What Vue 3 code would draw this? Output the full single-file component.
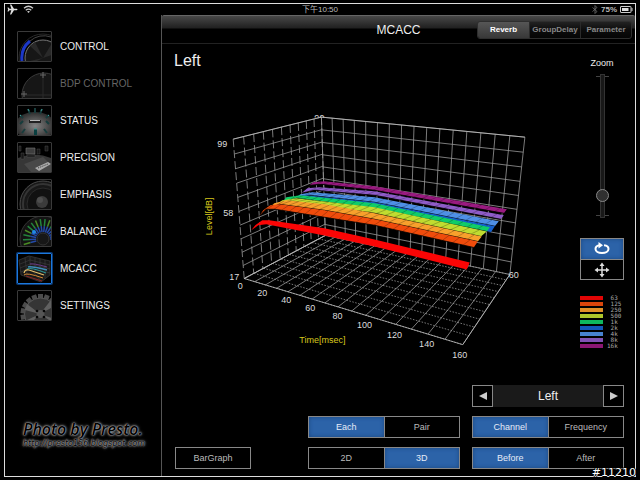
<script setup>
import { ref } from 'vue';

const menu = [
  { id: 'control', label: 'CONTROL' },
  { id: 'bdp', label: 'BDP CONTROL', disabled: true },
  { id: 'status', label: 'STATUS' },
  { id: 'precision', label: 'PRECISION' },
  { id: 'emphasis', label: 'EMPHASIS' },
  { id: 'balance', label: 'BALANCE' },
  { id: 'mcacc', label: 'MCACC' },
  { id: 'settings', label: 'SETTINGS' },
];
const tabs = ['Reverb', 'GroupDelay', 'Parameter'];
const channels = ['Left', 'Center', 'Right'];

const page = ref('mcacc');
const tab = ref('Reverb');
const zoom = ref(12);
const mode = ref('rotate');
const channel = ref(0);
const grouping = ref('Each');
const axis = ref('Channel');
const view = ref('3D');
const phase = ref('Before');

const stepChannel = (n) => {
  channel.value = (channel.value + n + channels.length) % channels.length;
};

// near / far edges of each band, back to front
const bands = [
  { label: '16k', color: '#9a1a80', near: [[310, 185], [322, 184], [375, 190], [504, 213]], far: [[314, 182], [324, 181], [375, 186], [507, 209]] },
  { label: ' 8k', color: '#8f5cc8', near: [[302, 193], [315, 190], [375, 195], [501, 219]], far: [[308, 188], [320, 187], [375, 191], [504, 215]] },
  { label: ' 4k', color: '#4f90e6', near: [[295, 199], [309, 195], [375, 202], [495, 226]], far: [[301, 194], [313, 192], [375, 197], [499, 221]] },
  { label: ' 2k', color: '#1560cc', near: [[289, 202], [303, 198], [375, 206], [491, 232]], far: [[295, 196], [307, 195], [375, 202], [495, 226]] },
  { label: ' 1k', color: '#10cc68', near: [[283, 202], [297, 198], [375, 208], [487, 231]], far: [[287, 197], [301, 195], [375, 203], [490, 227]] },
  { label: ' 500', color: '#c0dc30', near: [[275, 206], [291, 201], [375, 213], [481, 236]], far: [[283, 200], [297, 198], [375, 207], [487, 231]] },
  { label: ' 250', color: '#f8a02c', near: [[267, 210], [280, 204], [325, 210], [375, 219], [478, 241]], far: [[275, 203], [287, 200], [325, 204], [375, 213], [482, 236]] },
  { label: ' 125', color: '#f04c0c', near: [[260, 216], [267, 209], [276, 209], [325, 217], [375, 225], [474, 247]], far: [[264, 210], [271, 205], [280, 204], [325, 210], [375, 219], [478, 241]] },
  { label: ' 63', color: '#fb0505', near: [[252, 230], [259, 225], [267, 224], [325, 235], [375, 246], [467, 269]], far: [[256, 225], [263, 220], [270, 220], [325, 228], [375, 239], [470, 262]] },
];
const legend = [...bands].reverse();

// maps the unit square onto a quad, in perspective
const project = ([a, b, c, d]) => {
  const dx1 = b[0] - c[0];
  const dx2 = d[0] - c[0];
  const sx = a[0] - b[0] + c[0] - d[0];
  const dy1 = b[1] - c[1];
  const dy2 = d[1] - c[1];
  const sy = a[1] - b[1] + c[1] - d[1];
  const det = dx1 * dy2 - dx2 * dy1;
  const g = (sx * dy2 - dx2 * sy) / det;
  const h = (dx1 * sy - sx * dy1) / det;
  return (u, v) => {
    const w = g * u + h * v + 1;
    return [
      ((b[0] - a[0] + g * b[0]) * u + (d[0] - a[0] + h * d[0]) * v + a[0]) / w,
      ((b[1] - a[1] + g * b[1]) * u + (d[1] - a[1] + h * d[1]) * v + a[1]) / w,
    ];
  };
};

const seg = (p, q) => `M${p[0].toFixed(1)} ${p[1].toFixed(1)}L${q[0].toFixed(1)} ${q[1].toFixed(1)}`;

const grid = (quad, cols, rows) => {
  const at = project(quad);
  let down = '';
  let across = '';
  for (let i = 0; i <= cols; i++) down += seg(at(i / cols, 0), at(i / cols, 1));
  for (let i = 0; i <= rows; i++) across += seg(at(0, i / rows), at(1, i / rows));
  return { down, across };
};

const leftWall = grid([[234, 139], [322, 117], [326, 235], [245, 278]], 10, 10);
const backWall = grid([[322, 117], [525, 137], [510, 274], [326, 235]], 16, 10);
const floor = grid([[326, 235], [510, 274], [463, 344], [245, 278]], 16, 10);

const outline = (band) => [...band.near, ...[...band.far].reverse()].map((p) => p.join(',')).join(' ');

const along = (pts, x) => {
  let i = 0;
  while (i < pts.length - 2 && pts[i + 1][0] < x) i++;
  const [p, q] = [pts[i], pts[i + 1]];
  return [x, p[1] + ((q[1] - p[1]) * (x - p[0])) / (q[0] - p[0])];
};

const ribs = (band) => {
  const n0 = band.near[0][0];
  const n1 = band.near.at(-1)[0];
  const f0 = band.far[0][0];
  const f1 = band.far.at(-1)[0];
  let d = '';
  for (let i = 1; i < 24; i++) {
    const t = (i / 24) * (0.8 + (0.2 * i) / 24);
    d += seg(along(band.near, n0 + (n1 - n0) * t), along(band.far, f0 + (f1 - f0) * t + 3));
  }
  return d;
};

const ticks = [
  ['99', 223, 147], ['58', 229, 216], ['17', 235, 280], ['0', 241, 288],
  ['20', 263, 295], ['40', 287, 302], ['60', 311, 310], ['80', 338, 318],
  ['100', 365, 327], ['120', 395, 337], ['140', 427, 346], ['160', 460, 357], ['60', 514, 278],
];

const fan = Array.from({ length: 15 }, (_, i) => i * 14 - 106);
const teeth = Array.from({ length: 18 }, (_, i) => i * 20);
</script>

<template>
  <div class="screen">
    <header class="status-bar">
      <div class="status-left">
        <svg width="11" height="11" viewBox="0 0 22 22" fill="#ddd"><path d="M21 11c0-1-1-1.700-3-1.700h-4L8.500 1H6l2.600 8.300H5L3 7H1l1.200 4L1 15h2l2-2.300h3.600L6 21h2.500l5.500-8.300h4c2 0 3-.7 3-1.700z" /></svg>
        <svg width="11" height="9" viewBox="0 0 22 18" fill="none" stroke="#ccc" stroke-width="2.400"><path d="M2 6.500Q11-1.500 20 6.500M5.500 10.500q5.500-4.500 11 0" /><path d="M11 16l-3-3q3-2.200 6 0z" fill="#ccc" stroke="none" /></svg>
      </div>
      <time class="clock">下午10:50</time>
      <div class="status-right">
        <svg width="6" height="9" viewBox="0 0 12 18" fill="none" stroke="#777" stroke-width="1.500"><path d="M1 5l9 8-4 4V1l4 4-9 8" /></svg>
        <span>75%</span>
        <svg width="13" height="7" viewBox="0 0 26 14"><rect x="1" y="1" width="21" height="12" rx="1" fill="none" stroke="#ccc" stroke-width="2" /><rect x="4" y="4" width="13" height="6" fill="#ddd" /><path d="M23 4h2v6h-2z" fill="#ccc" /></svg>
      </div>
    </header>

    <div class="body">
      <aside class="sidebar">
        <nav class="menu">
          <button
            v-for="item in menu"
            :key="item.id"
            class="menu-item"
            :class="{ active: page === item.id }"
            :disabled="item.disabled"
            @click="page = item.id"
          >
            <svg class="thumb" viewBox="0 0 33 29" aria-hidden="true">
              <g v-if="item.id === 'control'" fill="none">
                <circle cx="25" cy="26" r="24" stroke="#292929" />
                <path d="M4 29A22 22 0 0 1 12 9" stroke="#1c38c8" stroke-width="3" />
                <circle cx="25" cy="26" r="18" fill="#161616" stroke="#777" />
                <path d="M25 26L12 14l5-4zM25 26l9-15v12zM25 26L12 29h7z" fill="#292929" />
                <path d="M12 9A22 22 0 0 1 33 5" stroke="#444" />
              </g>
              <g v-else-if="item.id === 'bdp'" fill="none" stroke="#3a3a3a">
                <circle cx="26" cy="26" r="22" fill="#161616" />
                <path d="M25 3v26M4 26h29" stroke="#2a2a2a" />
                <path d="M25 3v6M22 6h6M6 22v6M3 25h6" stroke="#666" />
              </g>
              <g v-else-if="item.id === 'status'">
                <radialGradient id="dial"><stop offset="0" stop-color="#858585" /><stop offset="1" stop-color="#2c2c2c" /></radialGradient>
                <ellipse cx="17" cy="20" rx="20" ry="14" fill="url(#dial)" />
                <path d="M11 14h12v3H11z" fill="#222" /><path d="M12 14h10v1H12z" fill="#bbb" />
                <path d="M10 3l2 5M17 2v5M24 3l-2 5M2 9l3 3M31 9l-3 3M2 18l3-3M31 18l-3-3M4 27l3-4M29 27l-3-4" stroke="#173c3c" stroke-width="2" />
                <path d="M16 23h3v6h-3z" fill="#0a3f40" />
                <path d="M10 3l1 2M24 3l-1 2M2 9l1 1M31 9l-1 1M16 23h3" stroke="#3f9a95" />
              </g>
              <g v-else-if="item.id === 'precision'">
                <path d="M0 15Q17 8 33 15v14H0z" fill="#363636" />
                <path d="M6 21l19-7 8 8v7H13z" fill="#484848" />
                <path d="M8 5h9v6H8z" fill="#3e3e3e" stroke="#777" stroke-width=".6" />
                <path d="M3 10h3v6H3zM19 6h3v5h-3zM27 3h3v5h-3zM1 3h2v5H1zM9 12h8v2H9z" fill="#181818" stroke="#555" stroke-width=".4" />
                <path d="M17 25l13-6 3 2-12 7z" fill="#aaa" /><path d="M20 25l10-4" stroke="#333" stroke-dasharray="1 1" />
              </g>
              <g v-else-if="item.id === 'emphasis'" fill="none">
                <circle cx="25" cy="24" r="23" fill="#181818" stroke="#494949" />
                <circle cx="25" cy="24" r="20" stroke="#343434" stroke-width="2" />
                <circle cx="25" cy="24" r="16" fill="#111" stroke="#2b2b2b" />
                <circle cx="24" cy="22" r="6" fill="#3b3b3b" />
                <circle cx="22" cy="20" r="3" fill="#4e4e4e" />
              </g>
              <g v-else-if="item.id === 'balance'">
                <circle cx="25" cy="22" r="23" fill="#131313" stroke="#333" />
                <g v-for="(a, i) in fan" :key="a" :transform="`rotate(${a} 25 22)`">
                  <path d="M25 2v7" :stroke="i % 3 ? '#24843c' : '#4a8c24'" stroke-width="1.500" />
                  <path d="M25 9v6" stroke="#244aa8" stroke-width="1.500" />
                </g>
                <circle cx="25" cy="22" r="6" fill="#171717" stroke="#333" />
                <circle cx="16" cy="15" r="2" fill="#2388e8" />
              </g>
              <g v-else-if="item.id === 'mcacc'" fill="none">
                <path d="M1 6l10-4 21 5v14l-9 7L3 21z" fill="#191919" stroke="#454545" stroke-width=".6" />
                <path d="M2 10l10-4 20 5M2 14l10-4 20 5M3 18l9-4 20 5M7 4l2 16M12 3v11l11 13M17 4v13M22 5v15M27 6v18" stroke="#404040" stroke-width=".6" />
                <path d="M12 10q3-1 17 3" stroke="#6c3c88" /><path d="M10 13q3-1 19 3" stroke="#3f8eb8" stroke-width="1.500" />
                <path d="M9 15q4-2 19 4" stroke="#289898" /><path d="M6 19q1-4 5-3l15 5" stroke="#e6c06c" stroke-width="1.200" />
                <path d="M6 21q2-3 19 3" stroke="#d68a35" /><path d="M8 22l16 5" stroke="#8c2424" />
              </g>
              <g v-else>
                <path v-for="a in teeth" :key="a" d="M20 3h5v6h-5z" fill="#4c4c4c" :transform="`rotate(${a} 22.500 23)`" />
                <circle cx="22.500" cy="23" r="16" fill="#353535" stroke="#555" />
                <path d="M22 23L7 19l2-6zM22 23L33 9l2 7zM22 23l-9 9-4-3zM22 23l12 4v4z" fill="#606060" />
                <circle cx="22.500" cy="23" r="4" fill="#555" />
                <circle v-for="p in [[19, 20], [26, 20], [19, 26], [26, 26]]" :key="p" :cx="p[0]" :cy="p[1]" r="1.300" fill="#050505" />
              </g>
            </svg>
            <span>{{ item.label }}</span>
          </button>
        </nav>
        <div class="credit">
          <p class="credit-name">Photo by Presto.</p>
          <p class="credit-url">http://presto156.blogspot.com</p>
        </div>
      </aside>

      <main class="panel">
        <div class="panel-head">
          <h1>MCACC</h1>
          <div class="tabs">
            <button v-for="t in tabs" :key="t" :class="{ active: tab === t }" @click="tab = t">{{ t }}</button>
          </div>
        </div>

        <div class="content">
          <section class="plot">
            <h2>{{ channels[channel] }}</h2>
            <svg class="chart" viewBox="163 76 406 290" role="img" aria-label="Reverb">
              <g class="grid">
                <path :d="leftWall.across" />
                <path :d="leftWall.down" stroke-dasharray="8 3" />
                <path :d="backWall.across" />
                <path :d="backWall.down" />
                <path :d="floor.down" />
                <path :d="floor.across" stroke-dasharray="1.500 1.500" />
                <path class="edge" d="M234 139L322 117L525 137M245 278L326 235M510 274L463 344L245 278" />
              </g>
              <g v-for="b in bands" :key="b.label">
                <polygon :points="outline(b)" :fill="b.color" />
                <polyline v-if="b.label !== ' 63'" class="shade" :points="b.near.map((p) => p.join(',')).join(' ')" />
                <path v-if="b.label !== ' 63'" class="rib" :d="ribs(b)" />
              </g>
              <clipPath id="behind"><path d="M310 108h16v9.500h-16z" /></clipPath>
              <text x="320" y="121" clip-path="url(#behind)">99</text>
              <text v-for="(t, i) in ticks" :key="i" :x="t[1]" :y="t[2]">{{ t[0] }}</text>
              <text class="axis" x="323" y="342">Time[msec]</text>
              <text class="axis" transform="translate(213 216) rotate(-90)">Level[dB]</text>
            </svg>
          </section>

          <section class="tools">
            <label for="zoom">Zoom</label>
            <div class="slider">
              <input id="zoom" v-model="zoom" type="range" min="0" max="100" />
            </div>
            <div class="modes">
              <button :class="{ active: mode === 'rotate' }" aria-label="Rotate" @click="mode = 'rotate'">
                <svg width="16" height="14" viewBox="0 0 32 28" fill="none" stroke="#fff" stroke-width="4"><path d="M20 6.500c5 .5 9 3.500 9 7.500 0 4.500-5.500 8-13 8S3 18.500 3 14c0-4 4-7 9-7.500" /><path d="M9 0l9 6.500L9 13z" fill="#fff" stroke="none" /></svg>
              </button>
              <button :class="{ active: mode === 'move' }" aria-label="Move" @click="mode = 'move'">
                <svg width="16" height="16" viewBox="0 0 32 32" fill="#ddd"><path d="M16 1l5 7h-3.500v6.500H24V11l7 5-7 5v-3.500h-6.500V24H21l-5 7-5-7h3.500v-6.500H8V21l-7-5 7-5v3.500h6.500V8H11z" /></svg>
              </button>
            </div>
            <ul class="legend">
              <li v-for="b in legend" :key="b.label"><i :style="{ background: b.color }"></i><span>{{ b.label }}</span></li>
            </ul>
          </section>
        </div>

        <div class="controls">
          <div class="picker">
            <button aria-label="Previous" @click="stepChannel(-1)"><svg width="8" height="8" viewBox="0 0 8 8"><path d="M8 0v8L0 4z" fill="#ccc" /></svg></button>
            <output>{{ channels[channel] }}</output>
            <button aria-label="Next" @click="stepChannel(1)"><svg width="8" height="8" viewBox="0 0 8 8"><path d="M0 0v8l8-4z" fill="#ccc" /></svg></button>
          </div>
          <div class="switch grouping">
            <button v-for="o in ['Each', 'Pair']" :key="o" :class="{ active: grouping === o }" @click="grouping = o">{{ o }}</button>
          </div>
          <div class="switch">
            <button v-for="o in ['Channel', 'Frequency']" :key="o" :class="{ active: axis === o }" @click="axis = o">{{ o }}</button>
          </div>
          <div class="switch single"><button>BarGraph</button></div>
          <div class="switch">
            <button v-for="o in ['2D', '3D']" :key="o" :class="{ active: view === o }" @click="view = o">{{ o }}</button>
          </div>
          <div class="switch">
            <button v-for="o in ['Before', 'After']" :key="o" :class="{ active: phase === o }" @click="phase = o">{{ o }}</button>
          </div>
        </div>
      </main>
    </div>
    <span class="stamp">#11210</span>
  </div>
</template>

<style>
body {
  background: #000;
}
</style>

<style scoped>
* {
  box-sizing: border-box;
  margin: 0;
  padding: 0;
}

.screen {
  position: relative;
  display: flex;
  flex-direction: column;
  min-height: 100vh;
  padding: 3px 4px;
  background: #000;
  color: #eee;
  font-family: "Liberation Sans", "Noto Sans CJK TC", sans-serif;
}

button {
  border: none;
  background: none;
  color: inherit;
  font: inherit;
  cursor: pointer;
}

.status-bar {
  display: grid;
  grid-template-columns: 1fr auto 1fr;
  align-items: center;
  height: 12px;
  padding: 0 2px;
  border: 1px solid #ddd;
  border-bottom: none;
  font-size: 8px;
  line-height: 10px;
  font-weight: bold;
  color: #bbb;
}

.clock {
  font-weight: normal;
}

.status-left,
.status-right {
  display: flex;
  align-items: center;
  gap: 5px;
}

.status-right {
  justify-content: flex-end;
  gap: 3px;
}

.body {
  flex: 1;
  display: flex;
  border: 1px solid #ddd;
  border-top: none;
}

/* Sidebar */
.sidebar {
  display: flex;
  flex-direction: column;
  width: 156px;
  padding: 16px 0 26px 12px;
}

.menu {
  display: flex;
  flex-direction: column;
  gap: 6px;
}

.menu-item {
  display: flex;
  align-items: center;
  gap: 8px;
  font-size: 10px;
  text-align: left;
}

.menu-item:disabled {
  color: #666;
}

.thumb {
  width: 35px;
  height: 31px;
  border: 1px solid #3a3a3a;
  border-radius: 1px;
}

.active .thumb {
  border-color: #1c78dc;
  box-shadow: 0 0 0 1px #0c3c78;
}

.credit {
  margin-top: auto;
  padding-left: 6px;
  font-family: "Open Sans", sans-serif;
  font-style: italic;
  color: #000;
  white-space: nowrap;
  text-shadow: 0 0 1px #ccc, 0 0 2px #aaa, 0 0 3px #888, 0 0 4px #555;
}

.credit-name {
  font-size: 16px;
  line-height: 18px;
  font-weight: 600;
}

.credit-url {
  font-family: "DejaVu Sans", sans-serif;
  font-size: 8px;
  line-height: 12px;
}

/* Panel */
.panel {
  flex: 1;
  display: flex;
  flex-direction: column;
  min-width: 0;
  border-left: 1px solid #555;
}

.panel-head {
  display: grid;
  grid-template-columns: 1fr auto 1fr;
  align-items: center;
  height: 29px;
  border-top: 1px solid #666;
  border-bottom: 1px solid #222;
  border-radius: 2px 2px 0 0;
  background: linear-gradient(#484848, #202020 12px, #000 13px);
}

.panel-head h1 {
  grid-column: 2;
  font-size: 12px;
  font-weight: normal;
}

.tabs {
  display: grid;
  grid-template-columns: repeat(3, 51px);
  justify-self: end;
  margin-right: 3px;
  border: 1px solid #2e2e2e;
  border-radius: 3px;
  background: linear-gradient(#222, #0c0c0c 50%, #050505);
}

.tabs button {
  height: 16px;
  font-size: 8px;
  font-weight: bold;
  color: #888;
}

.tabs button + button {
  border-left: 1px solid #2a2a2a;
}

.tabs .active {
  border-radius: 2px 0 0 2px;
  background: linear-gradient(#565656, #383838);
  color: #fff;
}

.content {
  display: flex;
}

.plot {
  flex: 1;
  min-width: 0;
}

.plot h2 {
  height: 32px;
  padding: 8px 12px;
  font-size: 16px;
  line-height: 18px;
  font-weight: normal;
}

.chart {
  display: block;
  width: 100%;
}

.chart text {
  font-size: 9px;
  fill: #ddd;
  text-anchor: middle;
}

.chart .axis {
  fill: #d8c81c;
}

.grid path {
  fill: none;
  stroke: #999;
  stroke-width: 0.8;
}

.grid .edge {
  stroke: #bbb;
}

.shade {
  fill: none;
  stroke: #000;
  stroke-opacity: 0.8;
  stroke-width: 1;
}

.rib {
  fill: none;
  stroke: #000;
  stroke-opacity: 0.4;
  stroke-width: 0.6;
}

.tools {
  display: flex;
  flex-direction: column;
  align-items: center;
  width: 66px;
  padding-top: 13px;
}

.tools label {
  font-size: 9px;
  line-height: 12px;
}

/* end stops above and below the track */
.slider {
  display: flex;
  justify-content: center;
  width: 13px;
  margin: 5px 0 20px;
  background:
    linear-gradient(#444, #444) 0 2px / 100% 1px no-repeat,
    linear-gradient(#444, #444) 0 141px / 100% 1px no-repeat;
}

.slider input {
  writing-mode: vertical-lr;
  direction: rtl;
  appearance: none;
  width: 13px;
  height: 144px;
  background: none;
}

.slider input::-webkit-slider-runnable-track {
  width: 5px;
  border: 1px solid #333;
  background: #181818;
}

.slider input::-webkit-slider-thumb {
  appearance: none;
  width: 13px;
  height: 13px;
  margin-left: -5px;
  border: 1px solid #888;
  border-radius: 50%;
  background: #303030;
}

.modes {
  display: flex;
  flex-direction: column;
  width: 44px;
  border: 1px solid #888;
}

.modes button {
  display: flex;
  align-items: center;
  justify-content: center;
  height: 20px;
}

.modes button + button {
  border-top: 1px solid #888;
}

.legend {
  width: 44px;
  margin-top: 15px;
  list-style: none;
}

.legend li {
  display: flex;
  align-items: center;
  gap: 4px;
  height: 6px;
  font-family: "DejaVu Sans Mono", monospace;
  font-size: 6px;
  line-height: 6px;
  white-space: pre;
  color: #aaa;
}

.legend i {
  width: 23px;
  height: 4px;
  opacity: 0.9;
}

/* Bottom controls */
.controls {
  display: grid;
  grid-template-columns: 1fr 152px 152px;
  grid-auto-rows: 22px;
  gap: 9px 12px;
  margin-top: auto;
  padding: 0 11px 7px 13px;
  font-size: 9px;
  color: #bbb;
}

.picker {
  grid-column: 3;
  display: flex;
}

.picker button {
  display: flex;
  align-items: center;
  justify-content: center;
  width: 21px;
  border: 1px solid #888;
}

.picker output {
  flex: 1;
  background: #1a1a1a;
  font-size: 12px;
  line-height: 22px;
  text-align: center;
  color: #eee;
}

.grouping {
  grid-column: 2;
}

.switch {
  display: flex;
  border: 1px solid #888;
}

.single {
  width: 76px;
}

.switch button {
  flex: 1;
}

.switch button + button {
  border-left: 1px solid #888;
}

.switch .active,
.modes .active {
  background: #2c63a8;
  box-shadow: inset 0 0 4px #1b4780;
  color: #e4ecf8;
}

.stamp {
  position: absolute;
  right: 4px;
  bottom: 1px;
  font-family: "DejaVu Sans", sans-serif;
  font-size: 11px;
  line-height: 13px;
  color: #fff;
  text-shadow: 1px 0 #000, -1px 0 #000, 0 1px #000, 0 -1px #000;
}
</style>
